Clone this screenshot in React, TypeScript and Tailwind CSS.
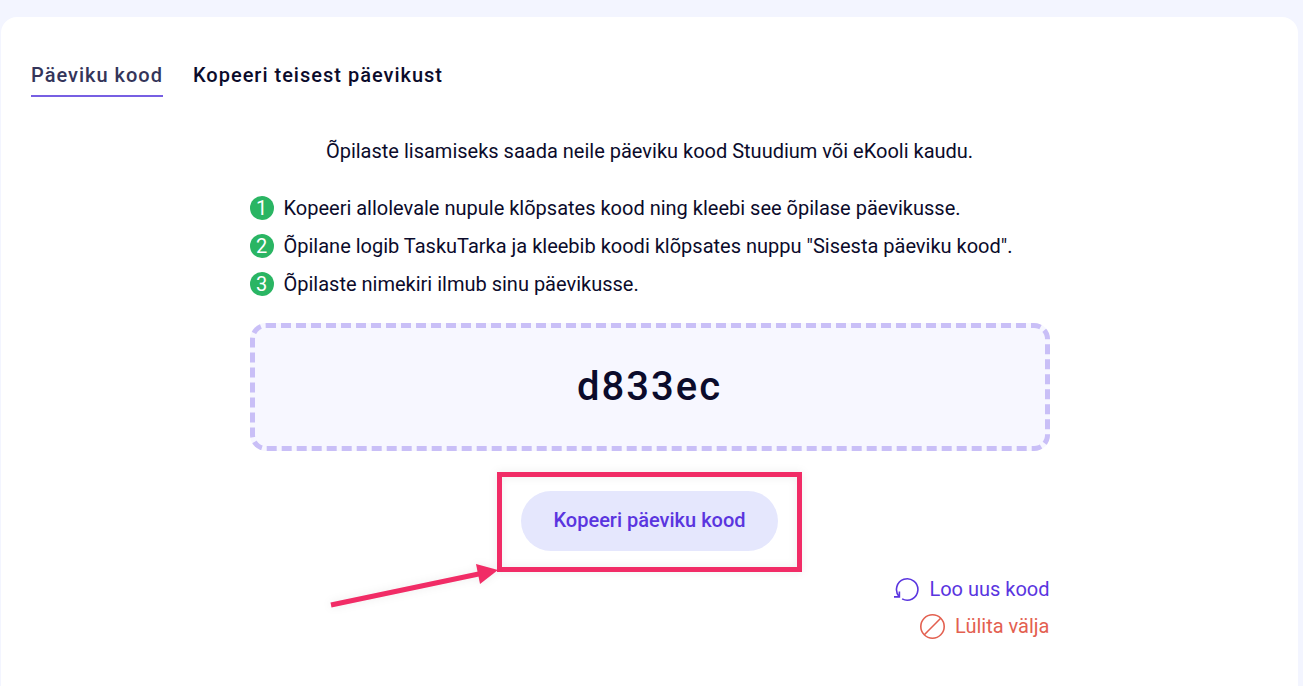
const steps = [
  'Kopeeri allolevale nupule klõpsates kood ning kleebi see õpilase päevikusse.',
  'Õpilane logib TaskuTarka ja kleebib koodi klõpsates nuppu "Sisesta päeviku kood".',
  'Õpilaste nimekiri ilmub sinu päevikusse.',
];

function Tabs() {
  return (
    <nav className="flex gap-[30px] text-xl leading-[30px] font-medium tracking-wider">
      <a href="#kood" aria-current="page" className="border-b-2 border-[#775fe3] pb-[5px] text-[#34355a]">
        Päeviku kood
      </a>
      <a href="#kopeeri" className="pb-[7px]">
        Kopeeri teisest päevikust
      </a>
    </nav>
  );
}

function RotateIcon() {
  return (
    <svg width="26" height="26" viewBox="0 0 26 26" fill="none" stroke="currentColor" strokeWidth="1.6" aria-hidden="true">
      <path d="M6.2 20.6A10.7 10.7 0 1 1 9.1 22.9" />
      <path d="M1 20.9H6.4V15.6" />
    </svg>
  );
}

function BanIcon() {
  return (
    <svg width="26" height="26" viewBox="0 0 26 26" fill="none" stroke="currentColor" strokeWidth="1.6" aria-hidden="true">
      <circle cx="13.5" cy="13.5" r="11.7" />
      <path d="M5.3 21.7L21.7 5.3" />
    </svg>
  );
}

function Highlight() {
  return (
    <>
      <div className="pointer-events-none absolute -inset-x-6 -top-[19px] -bottom-[21px] border-5 border-[#f12c66] drop-shadow-[0_0_4px_rgba(0,0,0,0.08)]" />
      <svg
        className="pointer-events-none absolute top-[69px] right-[279px] drop-shadow-[0_0_4px_rgba(0,0,0,0.08)]"
        width="172"
        height="50"
        viewBox="0 0 172 50"
        aria-hidden="true"
      >
        <path d="M4 45L154 13.5" stroke="#f12c66" strokeWidth="5" />
        <path d="M149 4L171 10L153 24Z" fill="#f12c66" />
      </svg>
    </>
  );
}

export default function App() {
  return (
    <div className="min-h-screen bg-[#f3f5ff] pt-[17px] pr-[5px] pl-px font-[Roboto,sans-serif] text-xl leading-[30px] text-[#0b0b2b]">
      <main className="min-h-[calc(100vh-17px)] rounded-t-2xl bg-white px-[30px] pt-[43px] pb-10">
        <Tabs />
        <section className="mx-auto mt-[39px] flex max-w-[800px] flex-col">
          <p className="text-center">Õpilaste lisamiseks saada neile päeviku kood Stuudium või eKooli kaudu.</p>
          <ol className="mt-[27px] flex flex-col gap-2">
            {steps.map((step, i) => (
              <li key={step} className="flex items-center gap-[10px]">
                <span className="flex size-6 shrink-0 items-center justify-center rounded-full bg-[#2ab563] text-white">
                  {i + 1}
                </span>
                {step}
              </li>
            ))}
          </ol>
          <div className="mt-6 flex h-32 items-center justify-center rounded-2xl border-5 border-dashed border-[#c9bff7] bg-[#f7f7ff] text-[40px] font-medium tracking-wider">
            d833ec
          </div>
          <div className="relative mt-10 self-center">
            <button type="button" className="h-[60px] rounded-full bg-[#e5e7fd] px-8 pb-0.5 font-medium text-[#5a35df]">
              Kopeeri päeviku kood
            </button>
            <Highlight />
          </div>
          <div className="mt-[23px] flex flex-col items-end gap-[7px]">
            <button type="button" className="flex items-center gap-[10px] text-[#5a35df]">
              <RotateIcon />
              Loo uus kood
            </button>
            <button type="button" className="flex items-center gap-[10px] text-[#e36050]">
              <BanIcon />
              Lülita välja
            </button>
          </div>
        </section>
      </main>
    </div>
  );
}
